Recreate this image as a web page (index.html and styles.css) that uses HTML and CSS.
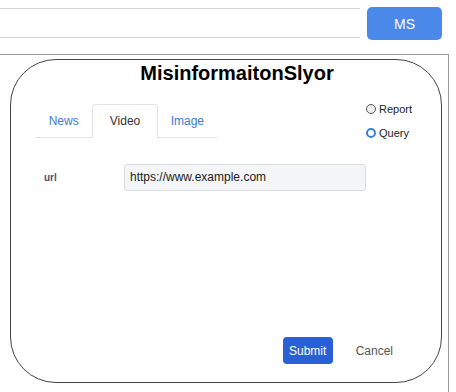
FILE: index.html
```html
<!DOCTYPE html>
<html lang="en">
<head>
    <meta charset="UTF-8">
    <meta name="viewport" content="width=device-width, initial-scale=1.0">
    <title>MisinformaitonSlyor</title>
    <link rel="stylesheet" href="styles.css">
</head>
<body>
    <div class="topbar">
        <div class="search"></div>
        <button class="ms-btn">MS</button>
    </div>

    <div class="outer">
        <div class="card">
            <h1 class="title">MisinformaitonSlyor</h1>

            <div class="top-row">
                <div class="tabs">
                    <a class="tab news">News</a>
                    <a class="tab video active">Video</a>
                    <a class="tab image">Image</a>
                </div>
                <div class="modes">
                    <label class="mode"><span class="radio"></span>Report</label>
                    <label class="mode"><span class="radio checked"></span>Query</label>
                </div>
            </div>

            <div class="form-row">
                <span class="field-label">url</span>
                <div class="field-input">https://www.example.com</div>
            </div>

            <div class="actions">
                <button class="submit">Submit</button>
                <button class="cancel">Cancel</button>
            </div>
        </div>
    </div>
</body>
</html>
```

FILE: styles.css
```css
body {
    margin: 0;
    font-family: "Liberation Sans", Arial, Helvetica, sans-serif;
    background: white;
    overflow: hidden;
}
.topbar {
    display: flex;
    align-items: flex-start;
    padding-top: 7px;
}
.search {
    width: 360px;
    height: 28px;
    margin-top: 1px;
    border-top: 1px solid #d4d4d4;
    border-bottom: 1px solid #d4d4d4;
}
.ms-btn {
    margin-left: 7px;
    width: 75px;
    height: 33px;
    border: none;
    border-radius: 5px;
    background: #4a88e9;
    color: white;
    font-family: inherit;
    font-size: 14px;
}
.outer {
    margin-top: 14px;
    width: 449px;
    height: 338px;
    padding: 4px 0 0 10px;
    box-sizing: border-box;
    border-top: 1px solid #9a9a9a;
    border-right: 1px solid #9a9a9a;
}
.card {
    width: 432px;
    height: 324px;
    box-sizing: border-box;
    border: 1px solid #444;
    border-radius: 46px;
    display: flex;
    flex-direction: column;
    padding-top: 1px;
}
.title {
    margin: 0;
    padding-left: 22px;
    text-align: center;
    font-size: 20px;
    line-height: 24px;
    font-weight: bold;
    color: #000;
}
.top-row {
    display: flex;
    align-items: flex-start;
    margin-top: 19px;
}
.tabs {
    display: flex;
    width: 182px;
    margin-left: 24px;
    border-bottom: 1px solid #e2e2e2;
}
.tab {
    box-sizing: border-box;
    padding: 9px 0;
    margin-bottom: -1px;
    border: 1px solid transparent;
    border-radius: 4px 4px 0 0;
    text-align: center;
    font-size: 12px;
    line-height: 14px;
    color: #3a7bd8;
}
.tab.news {
    width: 58px;
}
.tab.video {
    width: 66px;
}
.tab.image {
    width: 60px;
}
.tab.active {
    color: #333;
    border-color: #e2e2e2;
    border-bottom-color: white;
}
.modes {
    display: flex;
    flex-direction: column;
    gap: 10px;
    margin-left: 149px;
    margin-top: -2px;
}
.mode {
    display: flex;
    align-items: center;
    gap: 3px;
    font-size: 11px;
    line-height: 14px;
    color: #222;
}
.radio {
    width: 10px;
    height: 10px;
    box-sizing: border-box;
    border: 1px solid #555;
    border-radius: 50%;
    background: #eee;
}
.radio.checked {
    border: 2.5px solid #3a80e0;
    background: white;
}
.form-row {
    display: flex;
    align-items: center;
    margin-top: 24px;
}
.field-label {
    width: 80px;
    margin-left: 33px;
    font-size: 10px;
    font-weight: bold;
    color: #4a5270;
}
.field-input {
    width: 242px;
    height: 27px;
    box-sizing: border-box;
    padding-left: 5px;
    border: 1px solid #dcdcdc;
    border-radius: 3px;
    background: #f4f5f7;
    font-size: 12px;
    line-height: 25px;
    color: #222;
}
.actions {
    display: flex;
    justify-content: flex-end;
    align-items: center;
    gap: 13px;
    margin-top: auto;
    margin-bottom: 18px;
    margin-right: 38px;
}
.submit {
    width: 50px;
    height: 27px;
    border: none;
    border-radius: 4px;
    background: #2b5fd6;
    color: white;
    font-family: inherit;
    font-size: 12px;
}
.cancel {
    padding: 0 10px;
    height: 27px;
    border: none;
    background: none;
    color: #555;
    font-family: inherit;
    font-size: 12px;
}
```
